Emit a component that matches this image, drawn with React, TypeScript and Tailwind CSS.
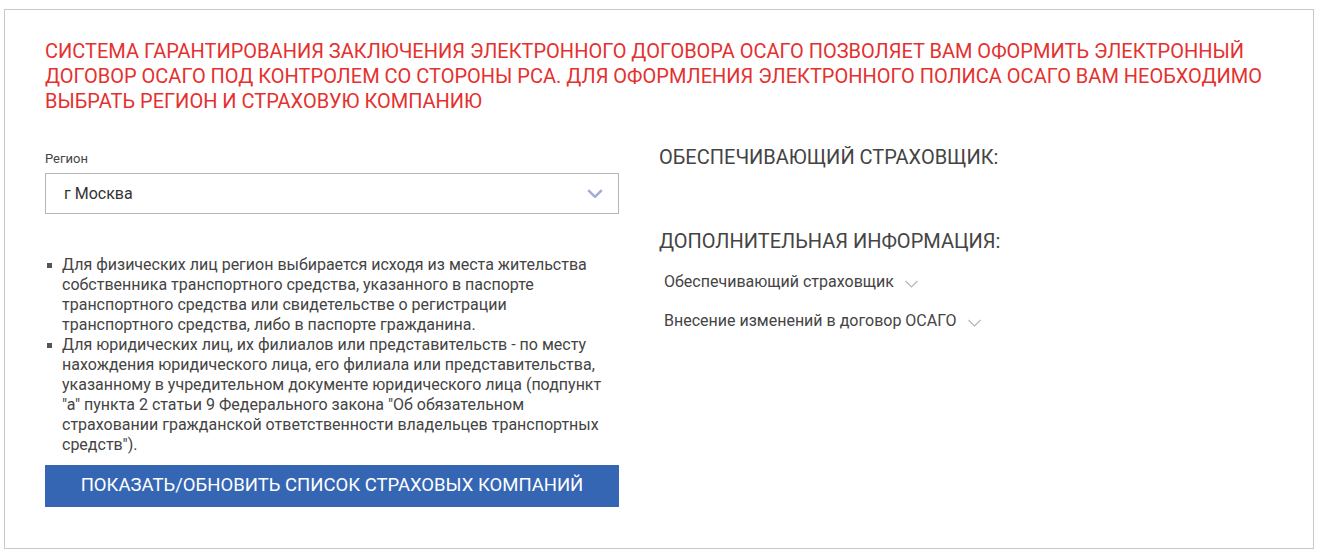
import { type ReactNode } from "react";

function Chevron({ className, width = 1.2 }: { className?: string; width?: number }) {
  return (
    <svg viewBox="0 0 14 8" className={className} fill="none" stroke="currentColor" strokeWidth={width}>
      <path d="M1 1l6 6 6-6" />
    </svg>
  );
}

function Bullet({ children }: { children: ReactNode }) {
  return (
    <li className="relative pl-[17px]">
      <span className="absolute left-[2px] top-[8px] h-[5px] w-[5px] bg-[#555]" />
      {children}
    </li>
  );
}

function InfoItem({ title }: { title: string }) {
  return (
    <button className="flex items-center gap-[10px] px-[5px] text-[16px] text-[#444]">
      {title}
      <Chevron className="mt-[3px] h-[8px] w-[15px] text-[#b5b5b5]" />
    </button>
  );
}

export default function App() {
  return (
    <div className="min-h-[554px] bg-white pl-[4px] pt-[9px] font-['Roboto',sans-serif]">
      <section className="h-[540px] w-[1310px] border border-[#c9c9c9] px-[40px] pt-[29px]">
        <h1 className="text-[20px] uppercase leading-[25px] text-[#e4312f]">
          Система гарантирования заключения электронного договора ОСАГО позволяет вам оформить электронный
          договор ОСАГО под контролем со стороны РСА. Для оформления электронного полиса ОСАГО вам необходимо
          выбрать регион и страховую компанию
        </h1>

        <div className="mt-[37px] flex gap-[40px]">
          <div className="w-[574px]">
            <label className="block text-[13px] leading-[16px] text-[#444]">Регион</label>
            <div className="mt-[6px] flex h-[41px] items-center justify-between border border-[#b5b5b5] pl-[18px] pr-[15px]">
              <span className="text-[16px] text-[#333]">г Москва</span>
              <Chevron width={2.2} className="h-[9px] w-[16px] text-[#a3add3]" />
            </div>

            <ul className="mt-[41px] text-[16px] leading-[20px] text-[#444]">
              <Bullet>
                Для физических лиц регион выбирается исходя из места жительства собственника транспортного
                средства, указанного в паспорте транспортного средства или свидетельстве о регистрации
                транспортного средства, либо в паспорте гражданина.
              </Bullet>
              <Bullet>
                Для юридических лиц, их филиалов или представительств - по месту нахождения юридического лица,
                его филиала или представительства, указанному в учредительном документе юридического лица
                (подпункт "а" пункта 2 статьи 9 Федерального закона "Об обязательном страховании гражданской
                ответственности владельцев транспортных средств").
              </Bullet>
            </ul>

            <button className="mt-[10px] flex h-[42px] w-full items-center justify-center bg-[#3566b4] text-[18.5px] uppercase text-white">
              Показать/обновить список страховых компаний
            </button>
          </div>

          <div className="-mt-[6px] flex-1">
            <h2 className="text-[20px] uppercase leading-[25px] text-[#444]">Обеспечивающий страховщик:</h2>
            <h2 className="mt-[59px] text-[20px] uppercase leading-[25px] text-[#444]">
              Дополнительная информация:
            </h2>
            <div className="mt-[18px] flex flex-col items-start gap-[19px] leading-[20px]">
              <InfoItem title="Обеспечивающий страховщик" />
              <InfoItem title="Внесение изменений в договор ОСАГО" />
            </div>
          </div>
        </div>
      </section>
    </div>
  );
}
